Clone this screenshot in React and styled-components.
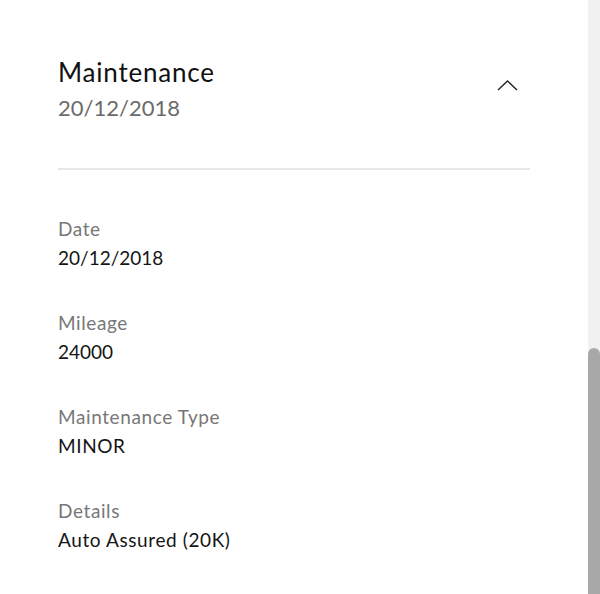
import React from "react"
import styled, { createGlobalStyle } from "styled-components"

const GlobalStyle = createGlobalStyle`
  html, body {
    margin: 0;
    padding: 0;
    background: #ffffff;
    font-family: Lato, "Noto Sans", sans-serif;
    overflow: hidden;
  }
`

const Page = styled.div`
  display: flex;
  width: 600px;
  height: 594px;
  overflow: hidden;
`

const Content = styled.div`
  flex: 1;
  padding: 55px 58px 0 58px;
`

const Header = styled.div`
  display: flex;
  justify-content: space-between;
  align-items: flex-start;
  padding-right: 12px;
  padding-bottom: 42px;
  border-bottom: 2px solid #e8e8e8;
`

const Title = styled.div`
  font-size: 26px;
  letter-spacing: 0.8px;
  color: #111;
  line-height: 34px;
`

const SubTitle = styled.div`
  font-size: 22px;
  color: #6b6b6b;
  line-height: 37px;
`

const Toggle = styled.button`
  border: none;
  background: none;
  padding: 0;
  margin-top: 22px;
  width: 21px;
  height: 16px;
  cursor: pointer;
`

const Fields = styled.div`
  display: flex;
  flex-direction: column;
  gap: 40px;
  padding-top: 46px;
`

const Field = styled.div`
  display: flex;
  flex-direction: column;
  gap: 4px;
`

const Label = styled.div`
  font-size: 19px;
  line-height: 25px;
  letter-spacing: 0.6px;
  color: #777;
`

const Value = styled.div`
  font-size: 19px;
  line-height: 25px;
  letter-spacing: ${props => (props.$numeric ? "0" : "0.6px")};
  color: #151515;
`

const Track = styled.div`
  width: 12px;
  height: 100%;
  background: #f1f1f1;
  display: flex;
  flex-direction: column;
`

const Thumb = styled.div`
  margin-top: 348px;
  flex: 1;
  background: #a8a8a8;
  border-radius: 6px 6px 0 0;
`

const fields = [
  ["Date", "20/12/2018"],
  ["Mileage", "24000"],
  ["Maintenance Type", "MINOR"],
  ["Details", "Auto Assured (20K)"],
]

export default function App() {
  return (
    <Page>
      <GlobalStyle />
      <Content>
        <Header>
          <div>
            <Title>Maintenance</Title>
            <SubTitle>20/12/2018</SubTitle>
          </div>
          <Toggle aria-label="collapse">
            <svg width="21" height="16" viewBox="0 0 21 16">
              <polyline
                points="1,13 10.5,4 20,13"
                fill="none"
                stroke="#222"
                strokeWidth="1.4"
              />
            </svg>
          </Toggle>
        </Header>
        <Fields>
          {fields.map(([label, value]) => (
            <Field key={label}>
              <Label>{label}</Label>
              <Value $numeric={/^[\d/]+$/.test(value)}>{value}</Value>
            </Field>
          ))}
        </Fields>
      </Content>
      <Track>
        <Thumb />
      </Track>
    </Page>
  )
}
